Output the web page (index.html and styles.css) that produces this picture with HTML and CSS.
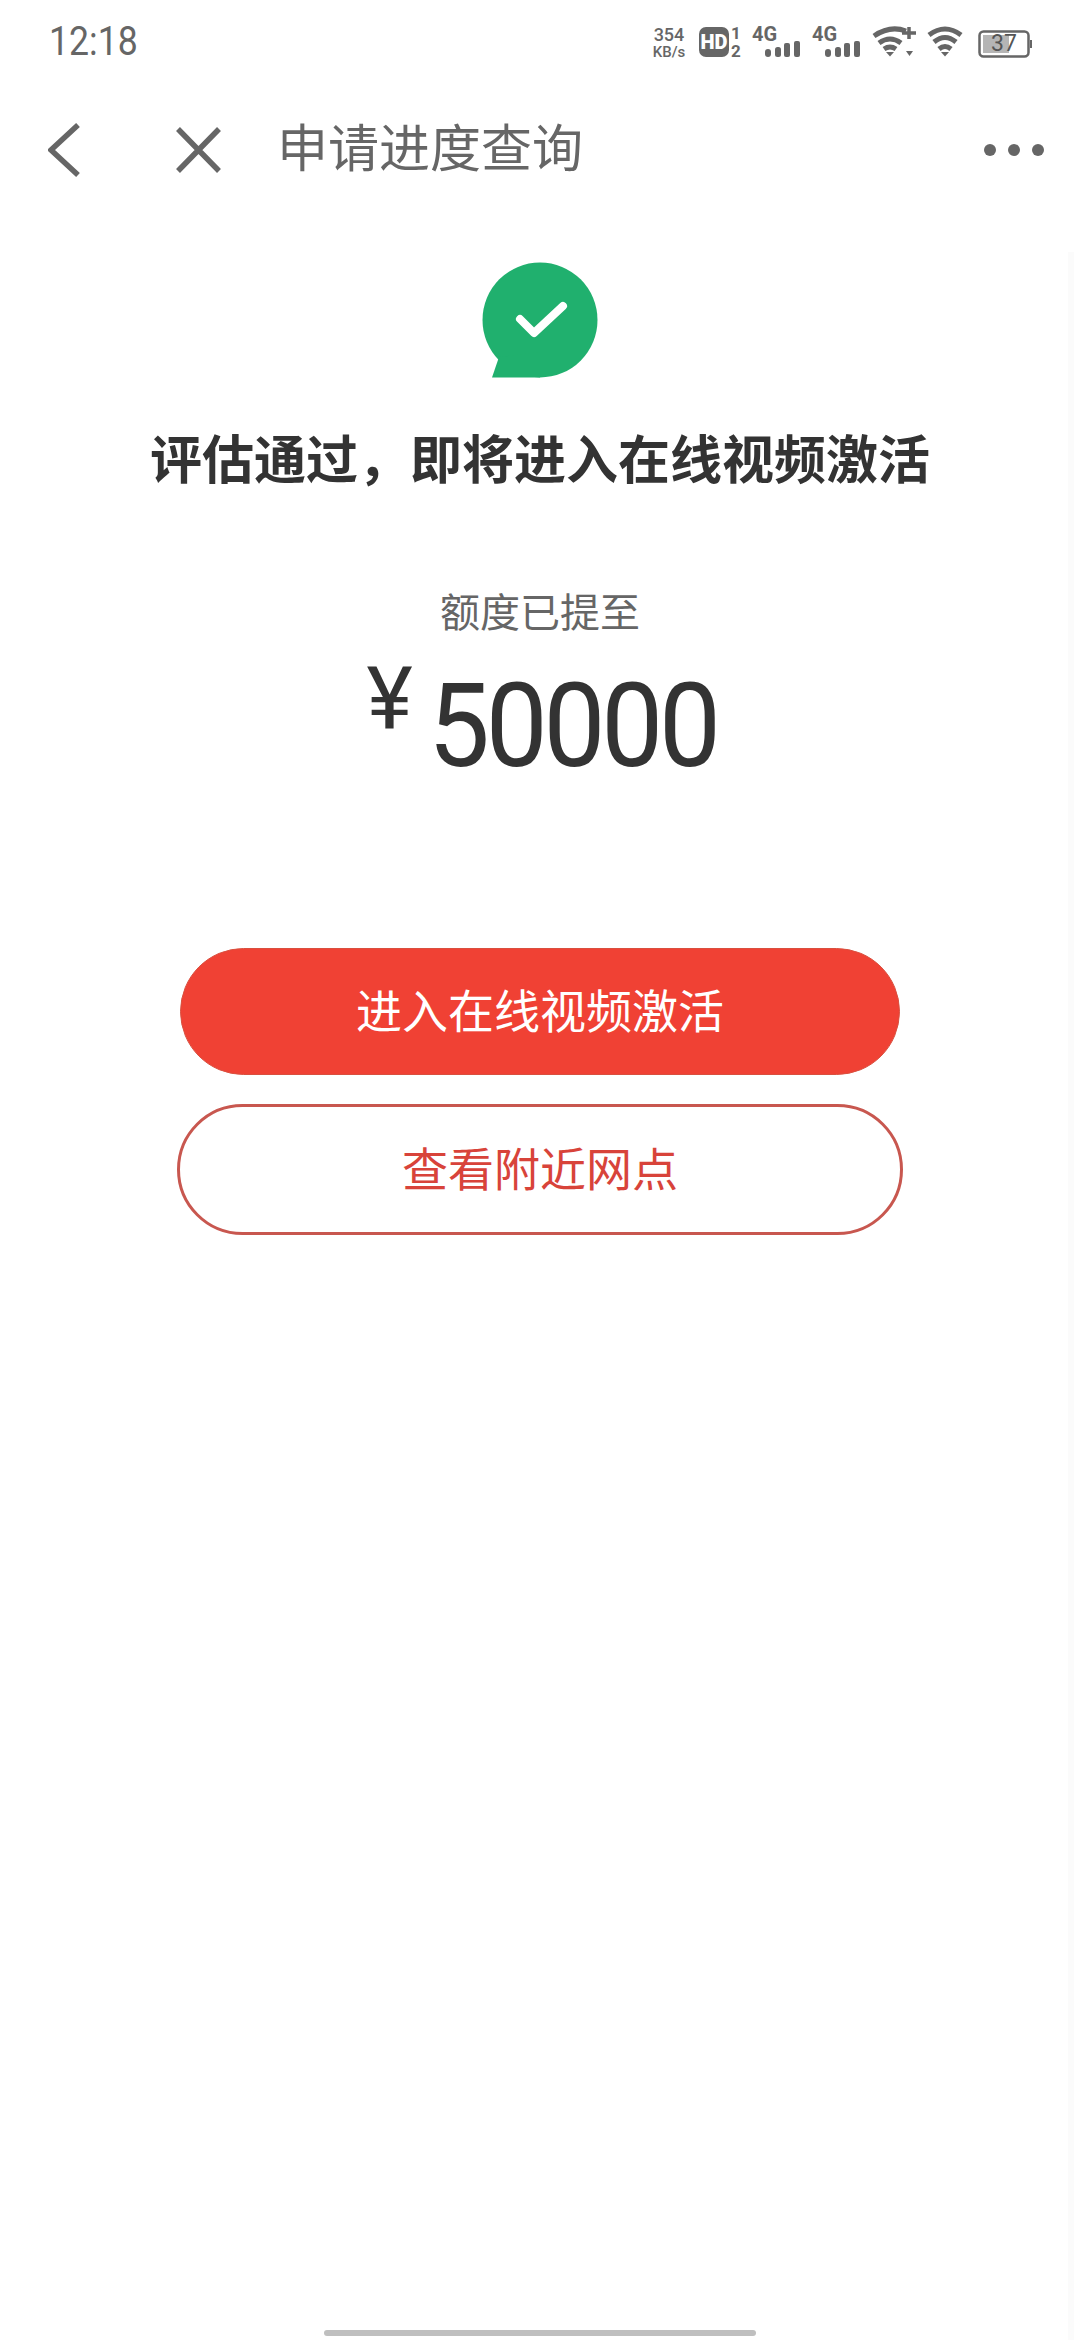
FILE: index.html
```html
<!DOCTYPE html>
<html lang="zh-CN">
<head>
    <meta charset="UTF-8">
    <meta name="viewport" content="width=device-width, initial-scale=1.0">
    <title>申请进度查询</title>
    <link rel="stylesheet" href="styles.css">
</head>
<body>
    <div class="status-bar">
        <span class="clock">12:18</span>
        <svg class="status-icons" width="390" height="40" viewBox="0 0 390 40">
            <!-- origin is x=650, y=22 of the screen -->
            <text class="net-top" x="19" y="19" text-anchor="middle">354</text>
            <text class="net-bottom" x="19" y="35" text-anchor="middle">KB/s</text>
            <rect x="49" y="5" width="30" height="30" rx="7" fill="#666"/>
            <text class="hd" x="64" y="27" text-anchor="middle">HD</text>
            <text class="sim" x="86" y="17" text-anchor="middle">1</text>
            <text class="sim" x="86" y="35" text-anchor="middle">2</text>
            <g id="sig">
                <text class="lte" x="102" y="19">4G</text>
                <rect x="115" y="27" width="6" height="8" rx="3" fill="#666"/>
                <rect x="125" y="25" width="6" height="10" rx="2.500" fill="#666"/>
                <rect x="134" y="21" width="6" height="14" rx="2" fill="#666"/>
                <rect x="144" y="19" width="6" height="16" rx="2" fill="#666"/>
            </g>
            <use href="#sig" x="60"/>
            <g fill="none" stroke="#666" stroke-width="5">
                <path d="M224 14 Q240 3 256 9"/>
                <path d="M229 21 Q240 13 251 21"/>
                <path d="M234 27 Q240 23 246 27"/>
                <path d="M279 13 Q295 1 311 13"/>
                <path d="M284 20 Q295 11 306 20"/>
                <path d="M289 27 Q295 22 301 27"/>
                <path d="M252 11H266M259 5V17" stroke-width="3.500"/>
            </g>
            <path d="M236 30H244L240 34.500Z" fill="#666"/>
            <path d="M256 29H263L259.500 34Z" fill="#666"/>
            <path d="M291 30H299L295 34.500Z" fill="#666"/>
            <rect x="329.500" y="9.500" width="49" height="25" rx="4" fill="none" stroke="#666" stroke-width="2.500"/>
            <rect x="333" y="13" width="26" height="18" fill="#b5b5b5"/>
            <rect x="380" y="18" width="2" height="8" fill="#666"/>
            <text class="batt" x="354" y="29" text-anchor="middle">37</text>
        </svg>
    </div>

    <header class="nav-bar">
        <svg class="nav-back" width="32" height="54" viewBox="0 0 32 54">
            <path d="M30 2 3 27 30 52" fill="none" stroke="#666" stroke-width="5.500"/>
        </svg>
        <svg class="nav-close" width="47" height="48" viewBox="0 0 47 48">
            <path d="M3 3 44 45M44 3 3 45" fill="none" stroke="#666" stroke-width="5.500"/>
        </svg>
        <h1 class="nav-title">申请进度查询</h1>
        <div class="nav-more"><i></i><i></i><i></i></div>
    </header>

    <main class="result">
        <svg class="result-icon" width="116" height="116" viewBox="0 0 116 116">
            <circle cx="58" cy="58" r="57.500" fill="#20b06e"/>
            <path d="M17 95 10 115.500H58V90Z" fill="#20b06e"/>
            <path d="M38 57 52 71 81 44" fill="none" stroke="#fff" stroke-width="8" stroke-linecap="round" stroke-linejoin="round"/>
        </svg>
        <h2 class="result-title">评估通过，即将进入在线视频激活</h2>
        <p class="limit-label">额度已提至</p>
        <div class="limit-amount">
            <span class="limit-yen">¥</span>
            <span class="limit-num">50000</span>
        </div>
        <button class="btn btn-primary">进入在线视频激活</button>
        <button class="btn btn-outline">查看附近网点</button>
    </main>

    <div class="scroll-strip"></div>
    <div class="home-bar"></div>
</body>
</html>
```

FILE: styles.css
```css
* { box-sizing: border-box; }
body {
    position: relative;
    width: 1080px;
    height: 2340px;
    margin: 0;
    overflow: hidden;
    background-color: #fff;
    font-family: Roboto, "Noto Sans CJK SC", sans-serif;
}

/* status bar */
.status-bar {
    display: flex;
    justify-content: space-between;
    height: 84px;
    padding: 22px 40px 0 49px;
}
.clock {
    display: inline-block;
    height: 40px;
    font-size: 40px;
    line-height: 40px;
    color: #666;
    transform: scaleX(0.89);
    transform-origin: left center;
}
.status-icons text {
    font-family: Roboto, sans-serif;
    font-weight: 700;
    fill: #666;
}
.status-icons .net-top { font-size: 18px; font-weight: 500; }
.status-icons .net-bottom { font-size: 15px; font-weight: 500; }
.status-icons .hd { font-size: 20px; fill: #fff; font-weight: 900; }
.status-icons .sim { font-size: 17px; }
.status-icons .lte { font-size: 20px; }
.status-icons .batt { font-size: 23px; font-weight: 400; fill: #555; }

/* nav */
.nav-bar {
    display: flex;
    align-items: center;
    height: 66px;
    margin-top: 33px;
    padding: 0 36px 0 48px;
}
.nav-close { margin-left: 95px; }
.nav-title {
    margin: 0 0 0 55px;
    font-size: 51px;
    font-weight: 400;
    line-height: 66px;
    color: #666;
}
.nav-more {
    display: flex;
    gap: 12px;
    margin-left: auto;
}
.nav-more i {
    width: 12px;
    height: 12px;
    border-radius: 50%;
    background-color: #666;
}

/* content */
.result {
    display: flex;
    flex-direction: column;
    align-items: center;
    padding-top: 79px;
}
.result-title {
    margin: 46px 0 0;
    font-size: 52px;
    font-weight: 700;
    line-height: 76px;
    color: #333;
}
.limit-label {
    margin: 86px 0 0;
    font-size: 40px;
    line-height: 56px;
    color: #666;
}
.limit-amount {
    display: flex;
    align-items: flex-start;
    height: 130px;
    margin-top: 19px;
    color: #333;
}
.limit-yen {
    font-size: 88px;
    line-height: 88px;
    margin-top: -6px;
    margin-right: 15px;
}
.limit-num {
    margin-right: -18px;
    font-size: 116px;
    line-height: 130px;
    letter-spacing: -4.400px;
    transform: scaleX(0.95);
    transform-origin: left center;
}
.btn {
    display: block;
    font-family: inherit;
    font-size: 46px;
    padding: 0 0 8px;
    border-radius: 70px;
}
.btn-primary {
    width: 720px;
    height: 127px;
    margin-top: 157px;
    color: #fff;
    background-color: #f04134;
    border: 1px solid #d9503f;
}
.btn-outline {
    width: 726px;
    height: 131px;
    margin-top: 29px;
    color: #d8433a;
    background-color: #fff;
    border: 3px solid #c8574f;
}

.scroll-strip {
    position: absolute;
    top: 252px;
    right: 6px;
    bottom: 0;
    width: 6px;
    background-color: #fbfbfb;
}
.home-bar {
    position: absolute;
    left: 324px;
    bottom: 4px;
    width: 432px;
    height: 6px;
    border-radius: 3px;
    background-color: #bfbfbf;
}
```
